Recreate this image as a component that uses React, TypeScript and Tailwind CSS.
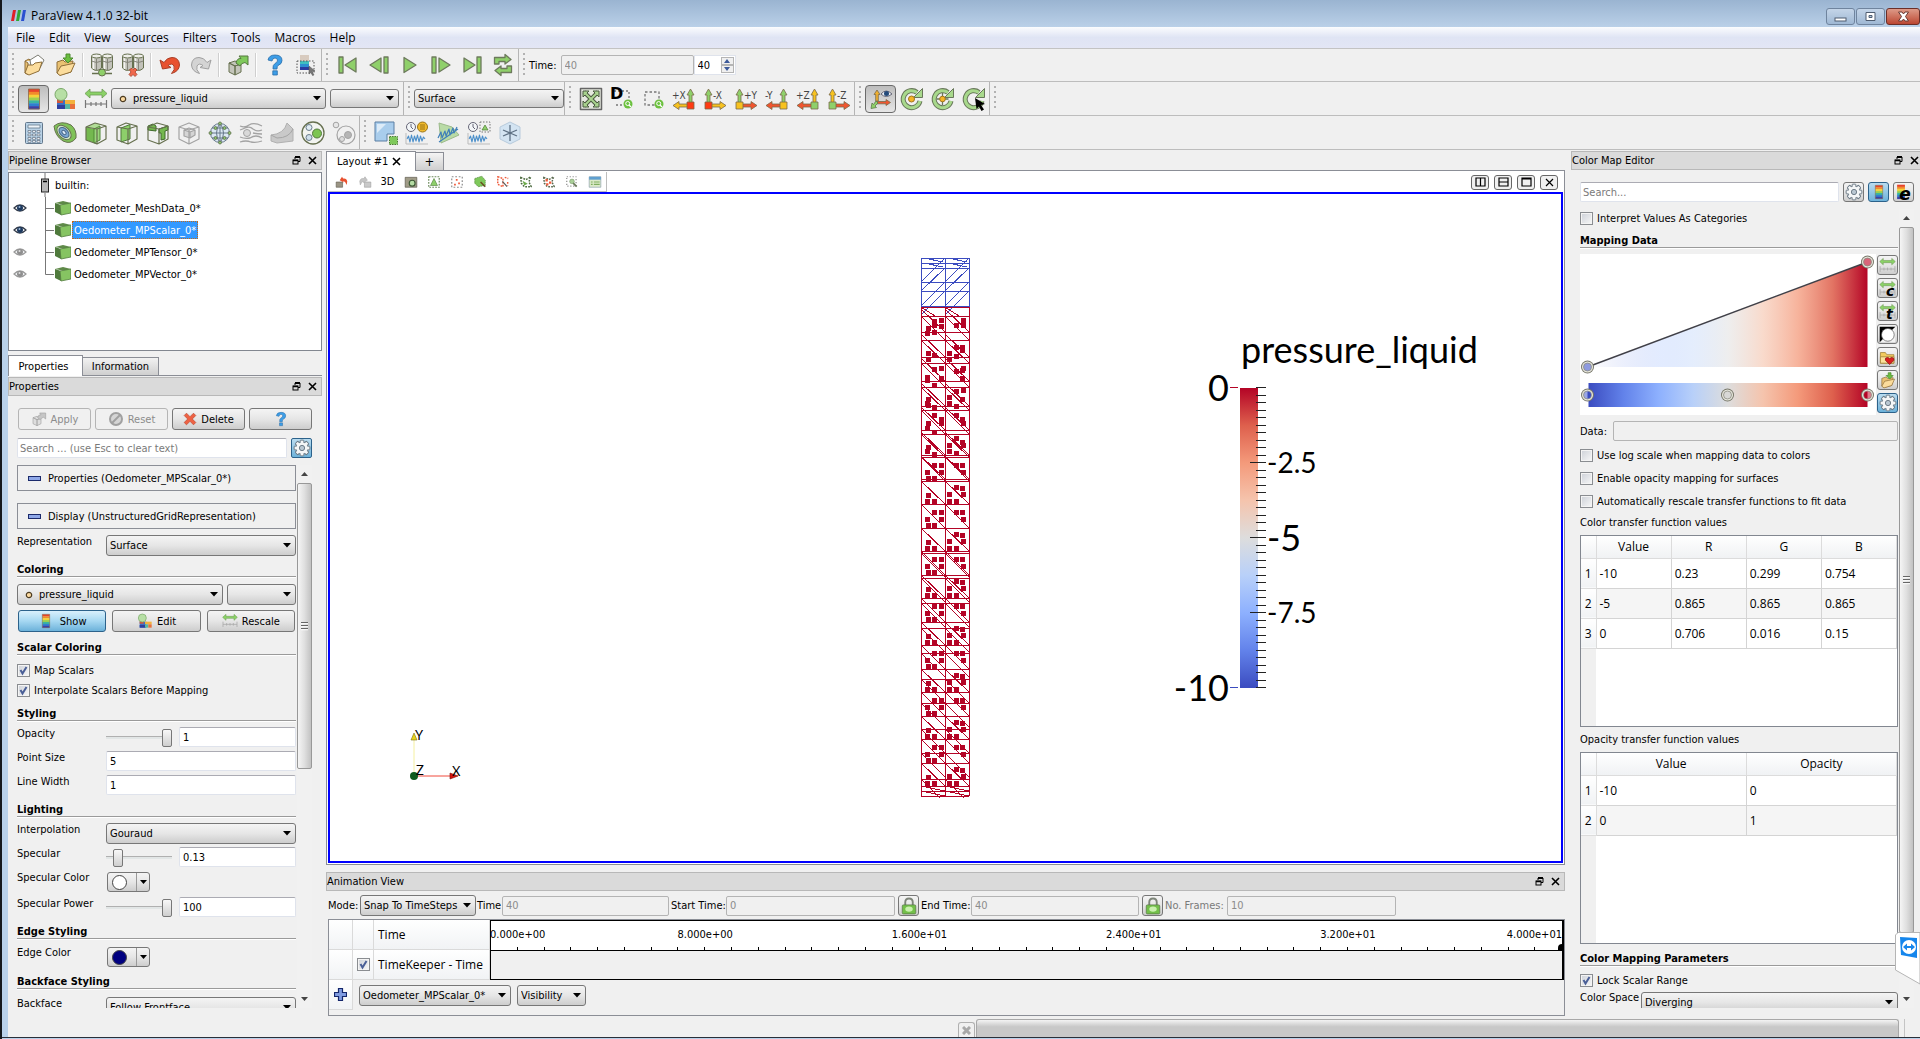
import React, { useId } from "react";

type Kids = { children?: React.ReactNode };

/* ---------- icon primitives ---------- */
const O = "#66704f";
const G = "#8fd06a";
const GREY = "#a3a3a3";

function Ic({ s = 24, children }: Kids & { s?: number }) {
  return (
    <svg width={s} height={s} viewBox="0 0 24 24" fill="none" strokeLinejoin="round" className="shrink-0 overflow-visible">
      {children}
    </svg>
  );
}

const Folder = () => (
  <>
    <path d="M3 8 L3 20 L6 21.500 L6 10 Z M3 8 L7 6 L9 8" fill="#e9c172" stroke="#8f6f3a" />
    <path d="M8 7 L16 2 L22 7 L18 15 L9 13 Z" fill="#fff" stroke="#7d7d74" />
    <path d="M3 20 L6 12 L11 12 L13 10 L20 9 L17 18 L7 22 Z" fill="#fbdc9c" stroke="#8f6f3a" />
  </>
);
const OpenIcon = ({ s }: { s?: number }) => <Ic s={s}><Folder /></Ic>;
const SaveIcon = ({ s }: { s?: number }) => (
  <Ic s={s}>
    <path d="M4 9 L4 20 L7 22 L18 19 L20 8 L12 9 L10 7 Z" fill="#e9c172" stroke="#8f6f3a" />
    <path d="M4 20 L8 13 L13 12 L22 10 L18 19 L7 22.500 Z" fill="#fbdc9c" stroke="#8f6f3a" />
    <path d="M13 1 H17 V5 H20 L15 10 L10 5 H13 Z" fill="#6abf3f" stroke="#4c8a2f" />
  </Ic>
);
const Drum = ({ x }: { x: number }) => (
  <g>
    <path d={`M${x} 3 V15 Q${x + 5} 20 ${x + 10} 15 V3`} fill="#c2c2ba" stroke={O} />
    <path d={`M${x + 2} 5 V16`} stroke="#f4f4f0" strokeWidth="1.500" />
    <path d={`M${x + 5} 6 V17 M${x} 8 Q${x + 5} 11 ${x + 10} 8`} stroke="#85857a" />
    <ellipse cx={x + 5} cy="3" rx="5" ry="2" fill="#efefea" stroke={O} />
  </g>
);
const ConnectIcon = () => (
  <Ic><Drum x={1.500} /><Drum x={12.500} /><path d="M2 20.500 H22" stroke={O} strokeWidth="1.500" /><circle cx="12" cy="19.500" r="3.500" fill={G} stroke={O} /></Ic>
);
const DisconnectIcon = () => (
  <Ic><Drum x={1.500} /><Drum x={12.500} /><path d="M8.500 17 L10.500 15 L12 16.500 L14 15 L16 17 L14 19 L16 21.500 L14 23.500 L12 21.500 L10 23.500 L8 21.500 L10 19 Z" fill="#f0684b" stroke="#a3402c" strokeWidth=".8" /></Ic>
);
const UndoIcon = () => (
  <Ic><path d="M2 7 L4.500 16 L13 14.500 L10 12.500 Q14 9.500 16 13 Q17.500 16.500 13.500 20.500 Q21 18.500 21.500 12 Q21 4.500 14 4.500 Q9 4.500 6 9.500 Z" fill="#e8512f" stroke="#a93e26" /></Ic>
);
const RedoIcon = () => (
  <Ic><path d="M22 7 L19.500 16 L11 14.500 L14 12.500 Q10 9.500 8 13 Q6.500 16.500 10.500 20.500 Q3 18.500 2.500 12 Q3 4.500 10 4.500 Q15 4.500 18 9.500 Z" fill="#d4d4d4" stroke="#a0a0a0" /></Ic>
);
const ApplyIcon = ({ s, grey }: { s?: number; grey?: boolean }) => (
  <Ic s={s}>
    <path d="M3 10 L9 13 V22 L3 19 Z M9 13 L15 11 V19 L9 22 Z M3 10 L9 8 L15 11 L9 13 Z" fill={grey ? "#dedede" : "#c4c5bb"} stroke={grey ? GREY : O} />
    <path d="M10 10 Q11 5 15 5.500 L13 3 H22 V12 L19 9.500 Q15 10 14 13 Z" fill={grey ? "#c6c6c6" : "#7fc95b"} stroke={grey ? GREY : "#55793f"} />
  </Ic>
);
const HelpIcon = ({ s }: { s?: number }) => (
  <Ic s={s}>
    <path d="M5 7 Q6 2 12 2 Q19 2 19 7.500 Q19 11 15 12.500 Q14 13 14 16 H10 Q9.500 12 12 10.500 Q15 9 14.500 7 Q14 5 12 5 Q9.500 5 9 8 Z" fill="#3d9ee8" stroke="#2a6da8" strokeWidth=".8" />
    <rect x="9.800" y="17.800" width="4.500" height="4.200" fill="#3d9ee8" stroke="#2a6da8" strokeWidth=".8" />
  </Ic>
);
const RAINBOW = ["#e8432b", "#f28a2c", "#f5d23a", "#9fd04e", "#3bb5a0", "#2f7fd0", "#3b3fa8"];
function Rainbow({ x, y, w, h }: { x: number; y: number; w: number; h: number }) {
  const n = RAINBOW.length;
  return <>{RAINBOW.map((c, i) => <rect key={c} x={x} y={y + (h / n) * i} width={w} height={h / n + 0.3} fill={c} />)}</>;
}
const PickIcon = () => (
  <Ic>
    <rect x="6" y="2" width="9" height="6" fill="#d8cbbf" />
    <rect x="6" y="8" width="9" height="9" fill="#2d8fd0" /><rect x="6" y="8" width="9" height="3" fill="#3fc0c0" /><rect x="6" y="14" width="9" height="3" fill="#2b3ba0" />
    <path d="M3 8 H20 V20 H3 Z" stroke="#555" strokeDasharray="1.500 1.500" />
    <path d="M15 13 L21 18 L18 18.500 L20 22 L18.500 22.500 L17 19.500 L15 21 Z" fill="#777" stroke="#555" strokeWidth=".5" />
  </Ic>
);
const vs = { fill: G, stroke: "#6d7a5c", strokeWidth: 1.3 };
const FirstIcon = () => <Ic><rect x="3" y="4" width="4" height="16" {...vs} /><path d="M20 5 V19 L9 12 Z" {...vs} /></Ic>;
const PrevIcon = () => <Ic><path d="M14 5 V19 L3 12 Z" {...vs} /><rect x="17" y="4" width="4" height="16" {...vs} /></Ic>;
const PlayIcon = () => <Ic><path d="M6 4.500 V19.500 L18 12 Z" {...vs} /></Ic>;
const NextIcon = () => <Ic><rect x="3" y="4" width="4" height="16" {...vs} /><path d="M10 5 V19 L21 12 Z" {...vs} /></Ic>;
const LastIcon = () => <Ic><path d="M4 5 V19 L15 12 Z" {...vs} /><rect x="17" y="4" width="4" height="16" {...vs} /></Ic>;
const LoopIcon = () => (
  <Ic>
    <path d="M3.500 11 V4.500 H14 V1.500 L20 6.500 L14 11 V8.500 H8 V11 Z" {...vs} />
    <path d="M20.500 13 V19.500 H10 V22.500 L4 17.500 L10 13 V15.500 H16 V13 Z" {...vs} />
  </Ic>
);
const BarIcon = ({ s }: { s?: number }) => (
  <Ic s={s}><Rainbow x={6.500} y={2} w={11} h={20} /><rect x="6.500" y="2" width="11" height="20" stroke="#8a6a4a" strokeWidth=".8" /></Ic>
);
const EditMapIcon = ({ s }: { s?: number }) => (
  <Ic s={s}>
    <rect x="4" y="13" width="10" height="9" fill="#3d6fc4" /><rect x="4" y="12" width="6" height="4" fill="#d4553a" /><rect x="4" y="18" width="9" height="4" fill="#2f3f9e" />
    <rect x="12" y="13" width="10" height="4" fill="#f3b23c" /><rect x="12" y="17" width="5" height="5" fill="#57b8a4" /><rect x="17" y="17" width="5" height="5" fill="#e8703a" />
    <circle cx="8" cy="7.500" r="6" fill="#b7dfa5" stroke="#7aa868" />
  </Ic>
);
const RangeIcon = ({ s, letter, dim }: { s?: number; letter?: string; dim?: boolean }) => (
  <Ic s={s}>
    <path d="M1 6.500 L6 2 V5 H18 V2 L23 6.500 L18 11 V8 H6 V11 Z" fill="#8bd267" stroke="#6d9a55" strokeWidth=".8" />
    <path d="M1.500 13 V21 M22.500 13 V21 M7 15 V19 M12 15 V19 M17 15 V19 M1.500 17 H22.500" stroke={dim ? "#aaa" : "#777"} strokeWidth="1.200" />
    {letter && <text x="10" y="22" fontSize="20" fontWeight="800" fontStyle="italic" fontFamily="DejaVu Sans" fill="#000">{letter}</text>}
  </Ic>
);
const CalcIcon = () => (
  <Ic>
    <rect x="3.500" y="1.500" width="17" height="21" rx="1" fill="#b9d2e6" stroke="#63788c" />
    <rect x="6" y="4" width="12" height="3" fill="#eef4f8" stroke="#63788c" strokeWidth=".8" />
    {[9.5, 13, 16.5, 19.5].map((y) => [6, 10.5, 15].map((x) => <rect key={`${x}-${y}`} x={x} y={y} width="3" height="1.800" fill="#fff" stroke="#5e6f7f" strokeWidth=".7" />))}
  </Ic>
);
const ContourIcon = () => (
  <Ic>
    <path d="M1 5 Q8 -1 18 4 Q24 9 23 17 Q18 24 10 20 Q2 15 1 5 Z" fill="#7fc258" stroke={O} />
    <ellipse cx="11" cy="11.500" rx="8.500" ry="5.500" transform="rotate(45 11 11.500)" fill="#cfe6c6" stroke={O} />
    <ellipse cx="11" cy="11.500" rx="6" ry="3.800" transform="rotate(45 11 11.500)" fill="#7ba7d2" stroke="#48688a" />
    <ellipse cx="11" cy="11.500" rx="2.500" ry="1.600" transform="rotate(45 11 11.500)" fill="#dcebf7" stroke="#48688a" />
  </Ic>
);
const CubeWire = ({ c = O }: { c?: string }) => <path d="M2 6 L13 8 V23 L2 19 Z M13 8 L22 5 V18 L13 23 M2 6 L11 2 L22 5" stroke={c} strokeWidth="1.200" />;
const ClipIcon = () => <Ic><path d="M2 6 L11 8 V22 L2 19 Z" fill="#74b84f" /><path d="M2 6 L11 2 L17 3.500 L11 8 Z" fill="#b1dd96" /><path d="M10 8 L16 5 V19 L10 22 Z" fill="#9bd47c" stroke="#4f8a35" /><CubeWire /></Ic>;
const SliceIcon = () => <Ic><path d="M6 7 L15 3.500 V18 L6 21 Z" fill="#8dcf6a" stroke="#4f7a3a" /><CubeWire /></Ic>;
const ThresholdIcon = () => <Ic><path d="M2 5 L7 3 L10 5 V10 L2 9 Z" fill="#74b84f" stroke="#3f6a2c" /><path d="M13 8 L22 5 V9 L19 10 V18 L15 19 V12 H13 Z" fill="#74b84f" stroke="#3f6a2c" /><CubeWire /></Ic>;
const SubsetIcon = () => <Ic><path d="M7 9 L13 11 V17 L7 15 Z M13 11 L18 9 V14 L13 17 M7 9 L12 7 L18 9" fill="#d5d5d5" stroke={GREY} strokeWidth="1.200" /><path d="M2 6 L12 9 V23 L2 18 Z M12 9 L22 6 V18 L12 23 M2 6 L12 2 L22 6" stroke={GREY} strokeWidth="1.200" /></Ic>;
const GlyphIcon = () => (
  <Ic>
    <circle cx="12" cy="12" r="9.500" fill="#dbe8f3" stroke="#66788a" />
    <path d="M12 2 V22 M2 12 H22 M12 2 Q5 12 12 22 M12 2 Q19 12 12 22 M4 7 H20 M4 17 H20" stroke="#66788a" />
    {[[12, 2.5], [2.5, 12], [21.5, 12], [12, 21.5], [7.5, 7], [16.5, 7], [7.5, 17], [16.5, 17]].map(([x, y]) => <circle key={`${x}-${y}`} cx={x} cy={y} r="1.500" fill="#8cc46c" stroke="#5e6f4d" strokeWidth=".8" />)}
  </Ic>
);
const StreamIcon = () => <Ic><circle cx="8" cy="12" r="3.500" fill="#d9d9d9" stroke={GREY} /><path d="M1 5 Q6 7 10 4 Q15 1 23 5 M1 9 Q4 8 6 7 Q11 5 14 8 Q18 11 23 9 M14 12 Q18 13 23 13 M1 16 Q6 18 11 17 Q17 13 23 17 M1 21 Q7 19 12 21 Q17 22 23 20" stroke={GREY} strokeWidth="1.300" /></Ic>;
const WarpIcon = () => <Ic><path d="M1 14 Q14 13 17 2 L23 8 V20 L7 22 L1 20 Z" fill="#c9c9c9" stroke="#b0b0b0" /><path d="M1 14 L7 17 Q19 17 23 8" stroke="#a5a5a5" /></Ic>;
const GroupIcon = () => <Ic><circle cx="12" cy="12" r="11" fill="#f2f4f0" stroke={O} strokeWidth="1.300" /><circle cx="8" cy="6.500" r="3" fill="#e0ecf4" stroke="#6b7d8c" /><circle cx="8" cy="16.500" r="3" fill="#cfe0ec" stroke="#6b7d8c" /><circle cx="16" cy="12.500" r="4.500" fill="#7cc552" stroke="#55793f" /></Ic>;
const ExtractIcon = () => <Ic><circle cx="14" cy="14" r="9" stroke={GREY} strokeWidth="1.200" /><circle cx="4" cy="4" r="2.800" stroke={GREY} fill="#e6e6e6" /><circle cx="10" cy="18" r="2.500" stroke={GREY} fill="#ddd" /><circle cx="16" cy="14" r="3.500" fill="#b5b5b5" stroke={GREY} /></Ic>;
const FindIcon = () => (
  <Ic><path d="M1 1 H20 V13 H13 V20 H1 Z" fill="#a9cdec" stroke="#5b7fa3" /><path d="M3 3 H12 L3 12 Z" fill="#dcebf8" /><rect x="15.500" y="15.500" width="8" height="8" fill="#7fc95b" stroke="#4c7a35" strokeDasharray="1.500 1" /></Ic>
);
const Wave = ({ y = 18 }: { y?: number }) => <path d={`M2 ${y} l1.500 -3 l1.500 6 l1.500 -7 l1.500 7 l1.500 -6 l1.500 5 l1.500 -6 l1.500 7 l1.500 -6 l1.500 5 l1.500 -4 l1.500 2`} stroke="#4b8fca" strokeWidth="1.100" />;
const PlotTimeIcon = () => <Ic><Wave /><path d="M1 12 V23 H23" stroke="#bbb" /><circle cx="6" cy="6" r="4.500" fill="#f3f6f8" stroke="#667" /><path d="M6 3 V6 L8 8" stroke="#667" /><circle cx="17.500" cy="6" r="5" fill="#f2bb2d" stroke="#9a7416" /><path d="M15 4 H20 M15 6 H20 M15 8 H20" stroke="#9a7416" /></Ic>;
const PlotLineIcon = () => <Ic><path d="M3 2 L16 6 L23 14 L5 22 Z" fill="#b9dba6" stroke="#9cba8b" /><path d="M2 17 L5 11 L6 17 L9 10 L10 15 L13 8 L14 14 L17 7 L18 12 L21 6 M3 21 L22 8" stroke="#3f7fb8" strokeWidth="1.200" /></Ic>;
const PlotSelIcon = () => <Ic><Wave /><path d="M1 12 V23 H23" stroke="#bbb" /><circle cx="6" cy="6" r="4.500" fill="#f3f6f8" stroke="#667" /><path d="M6 3 V6 L8 8" stroke="#667" /><rect x="13" y="1" width="10" height="10" stroke="#777" strokeDasharray="1.500 1.500" /><path d="M18 4 L21 9 H15 Z" fill={G} stroke="#4c7a35" strokeWidth=".7" /></Ic>;
const ProbeIcon = () => <Ic><path d="M2 6 L12 1 L22 6 V18 L12 23 L2 18 Z" fill="#d3e4f2" stroke="#b7cadb" /><path d="M12 4 V20 M5 9 L19 15 M19 9 L5 15" stroke="#5e7184" strokeWidth="1.300" /></Ic>;
const ResetCamIcon = () => (
  <Ic><rect x="1.500" y="1.500" width="21" height="21" fill="#e4e8de" stroke="#666" strokeWidth="1.500" /><path d="M5 5 L19 19 M19 5 L5 19" stroke="#4b5a40" strokeWidth="4" /><path d="M4 4 H10 L4 10 Z M20 4 V10 L14 4 Z M20 20 H14 L20 14 Z M4 20 V14 L10 20 Z" fill="#a9d48e" stroke="#4b5a40" /><path d="M6 6 L18 18 M18 6 L6 18" stroke="#a9d48e" strokeWidth="2" /></Ic>
);
const Mag = () => <><circle cx="18" cy="17" r="4.500" fill="#6cc13f" /><circle cx="17.700" cy="16.500" r="2" stroke="#fff" /><path d="M19 18 L21 20" stroke="#fff" strokeWidth="1.300" /></>;
const ZoomDataIcon = () => <Ic><path d="M4 4 H19 V18 H5" stroke="#777" strokeDasharray="2 2" strokeWidth="1.300" /><Mag /><text x="0" y="12" fontSize="16" fontWeight="bold" fontFamily="DejaVu Sans" fill="#000">D</text></Ic>;
const ZoomBoxIcon = () => <Ic><rect x="4" y="5" width="14" height="13" stroke="#777" strokeDasharray="2.500 2" strokeWidth="1.300" /><Mag /></Ic>;
function AxisIcon({ label, up, side, sq, flip }: { label: string; up: string; side: string; sq: string; flip?: boolean }) {
  const w = { stroke: "#7a6a4a", strokeWidth: 0.8 };
  return (
    <Ic>
      {flip ? (
        <>
          <path d="M4 16 V8 H2 L5.500 2 L9 8 H7 V16 Z" fill={up} {...w} />
          <path d="M7 17 H17 V14.500 L23 18.500 L17 22.500 V20 H7 Z" fill={side} {...w} />
          <rect x="2" y="15" width="7" height="7" fill={sq} {...w} />
          <text x="10" y="12" fontSize="10" fontFamily="DejaVu Sans Condensed" fill="#444">{label}</text>
        </>
      ) : (
        <>
          <path d="M17 16 V8 H15 L18.500 2 L22 8 H20 V16 Z" fill={up} {...w} />
          <path d="M17 17 H7 V14.500 L1 18.500 L7 22.500 V20 H17 Z" fill={side} {...w} />
          <rect x="15" y="15" width="7" height="7" fill={sq} {...w} />
          <text x="0" y="12" fontSize="10" fontFamily="DejaVu Sans Condensed" fill="#444">{label}</text>
        </>
      )}
    </Ic>
  );
}
const CenterAxesIcon = () => (
  <Ic>
    <path d="M8 3 L11 7.500 H9.300 V14 H6.700 V7.500 H5 Z" fill="#f0b030" stroke="#7a6a4a" strokeWidth=".8" />
    <path d="M8 14.500 H17 V12.500 L21.500 15.500 L17 18.500 V16.800 H8 Z" fill="#f0552f" stroke="#7a6a4a" strokeWidth=".8" />
    <path d="M7 14 L9 16 L6 19 L7.500 20.500 L2 21.500 L3 16 L4.500 17.500 Z" fill="#8fd06a" stroke="#5c7a4a" strokeWidth=".8" />
    <path d="M12 7 Q17 1 23 7 Q17 12 12 7 Z" fill="#e8eef4" stroke="#667" /><circle cx="17.500" cy="6.500" r="2.500" fill="#244a7a" />
  </Ic>
);
const ArcArrow = ({ d = "M20 14 A8.500 8.500 0 1 1 17 5.500" }: { d?: string }) => (
  <>
    <path d={d} stroke="#68775a" strokeWidth="5" /><path d={d} stroke="#a8d98c" strokeWidth="3" />
    <path d="M22.500 1.500 V10.500 H13.500 Z" fill="#a8d98c" stroke="#68775a" />
  </>
);
const RotCenterIcon = () => <Ic><ArcArrow /><circle cx="11.500" cy="12" r="3" fill="#f5b427" stroke="#a3751b" /></Ic>;
const PickCenterIcon = () => <Ic><ArcArrow /><path d="M11.500 6 V18 M5.500 12 H17.500" stroke="#68775a" strokeWidth="1.300" /><circle cx="11.500" cy="12" r="2.800" fill="#f5b427" stroke="#a3751b" /></Ic>;
const ResetCenterIcon = () => <Ic><ArcArrow /><path d="M13 11 L23 17 L19 18 L22 22.500 L19.500 24 L17 19.500 L14.500 22 Z" fill="#000" /></Ic>;
const GearIcon = ({ s = 18 }: { s?: number }) => (
  <Ic s={s}>
    {[0, 45, 90, 135].map((a) => <rect key={a} x="9.500" y="1.500" width="5" height="21" rx="1" fill="#f4f6f7" stroke="#6c7a86" strokeWidth="1.300" transform={`rotate(${a} 12 12)`} />)}
    <circle cx="12" cy="12" r="7.500" fill="#f4f6f7" />
    <circle cx="12" cy="12" r="3.500" fill="#b9c7d2" stroke="#6c7a86" strokeWidth="1.300" />
  </Ic>
);
const FavIcon = () => (
  <Ic s={17}>
    <path d="M2 5 H9 L11 8 H21 V20 H2 Z" fill="#f2cb5e" stroke="#9a7a2e" /><path d="M2 11 H21 V20 H2 Z" fill="#fbe39a" stroke="#9a7a2e" />
    <path d="M15 22 L9 16 Q8 12 12 12 Q14 12 15 14 Q16 12 18.500 12 Q22 13 21 16 Z" fill="#d81f1f" stroke="#8a1212" />
  </Ic>
);
const InvertIcon = () => <Ic s={17}><rect x="1" y="1" width="22" height="22" fill="#f2f2f2" /><path d="M1 23 V1 H23 Z" fill="#000" /><circle cx="12.500" cy="12.500" r="9" fill="#fff" stroke="#555" /></Ic>;
const PresetMapIcon = () => <Ic s={17}><Rainbow x={3} y={1} w={11} h={20} /><text x="6" y="23" fontSize="24" fontWeight="800" fontStyle="italic" fontFamily="DejaVu Sans" fill="#000">e</text></Ic>;
const LockIcon = () => (
  <Ic s={18}><path d="M7 11 V7 Q7 2 12 2 Q17 2 17 7 V11" stroke="#7d8478" strokeWidth="2.500" /><rect x="3" y="10.500" width="18" height="12" rx="1.500" fill="#73c04a" stroke="#5b7a4a" /><ellipse cx="12" cy="16" rx="5" ry="3.500" fill="#c9f0ae" /></Ic>
);
const EyeIcon = ({ dim }: { dim?: boolean }) => (
  <svg width="14" height="12" viewBox="0 0 14 12" fill="none">
    <path d="M1 6 Q7 0 13 6 Q7 12 1 6 Z" fill="#f4f6f8" stroke={dim ? "#9a9a9a" : "#333b48"} strokeWidth="1.200" />
    <circle cx="7" cy="6" r="3" fill={dim ? "#8f8f8f" : "#1d3a5f"} /><circle cx="6.500" cy="5" r="1" fill={dim ? "#e0e0e0" : "#9db8d8"} />
  </svg>
);
const GreenCube = () => (
  <svg width="16" height="16" viewBox="0 0 16 16" className="shrink-0">
    <path d="M0 3 L8 1 L16 3 L10 5 Z" fill="#5f8a49" /><path d="M0 3 L6 5 V15 L0 12 Z" fill="#4f7a3c" /><path d="M5 5 L16 3 V13 L6 15 Z" fill="#86c462" stroke="#557f41" strokeWidth=".8" />
  </svg>
);
const FloatIcon = () => <svg width="9" height="9" viewBox="0 0 9 9" fill="none"><path d="M3 3 V1 H8 V5.500 H6" stroke="#000" /><path d="M3 1 H8" stroke="#000" strokeWidth="2" /><rect x="1" y="4" width="5" height="4" stroke="#000" /><path d="M1 4.500 H6" stroke="#000" strokeWidth="1.500" /></svg>;
const CrossIcon = () => <svg width="9" height="9" viewBox="0 0 9 9"><path d="M1 1 L8 8 M8 1 L1 8" stroke="#000" strokeWidth="1.600" /></svg>;
const RedX = () => <Ic s={14}><path d="M2 6 L6 2 L12 8 L18 2 L22 6 L16 12 L22 18 L18 22 L12 16 L6 22 L2 18 L8 12 Z" fill="#ee6244" stroke="#b43a22" /></Ic>;
const ResetIcon = () => <Ic s={16}><circle cx="12" cy="12" r="9" fill="#d5d5d5" stroke="#a0a0a0" strokeWidth="3" /><path d="M6 18 L18 6" stroke="#a0a0a0" strokeWidth="3" /></Ic>;
const PointIcon = () => <svg width="8" height="8" viewBox="0 0 8 8"><circle cx="4" cy="4" r="2.700" fill="#fbd9a0" stroke="#4a3a20" strokeWidth="1.200" /></svg>;

/* ---------- widgets ---------- */
const FACE = "rounded-[3px] border border-[#777] bg-linear-to-b from-[#f4f4f4] via-[#e6e6e6] to-[#cdcdcd]";

function Select({ label, value, className = "", small, icon }: { label: string; value?: string; className?: string; small?: boolean; icon?: boolean }) {
  return (
    <span className={"relative flex shrink-0 items-center " + className}>
      <select aria-label={label} className={(small ? "h-[19px]" : "h-[21px]") + " w-full appearance-none pr-4 text-[11px] outline-none " + (icon ? "pl-[21px] " : "pl-[3px] ") + FACE}>
        <option>{value ?? ""}</option>
      </select>
      {icon && <span className="pointer-events-none absolute left-2"><PointIcon /></span>}
      <svg width="8" height="5" viewBox="0 0 8 5" className="pointer-events-none absolute right-[5px]"><path d="M0 0 H8 L4 4.500 Z" fill="#000" /></svg>
    </span>
  );
}

function Field({ label, value, className = "", disabled }: { label: string; value?: string; className?: string; disabled?: boolean }) {
  return (
    <input
      aria-label={label}
      defaultValue={value}
      disabled={disabled}
      className={"h-5 min-w-0 rounded-[2px] border px-[3px] text-[11px] outline-none " + (disabled ? "border-[#b4b4b4] bg-[#f0f0f0] text-[#8c8c8c] " : "border-[#dfe3ec] border-t-[#ababb3] bg-white ") + className}
    />
  );
}

function Check({ label, on }: { label: string; on?: boolean }) {
  const id = useId();
  return (
    <span className="flex items-center gap-1">
      <span className="relative flex">
        <input id={id} type="checkbox" defaultChecked={on} className="h-[13px] w-[13px] appearance-none border border-[#8a8d91] bg-linear-to-br from-[#cdd1d8] to-[#f8f8f8] shadow-[inset_0_0_0_1px_#f4f4f4]" />
        {on && <svg width="13" height="13" viewBox="0 0 13 13" fill="none" className="pointer-events-none absolute inset-0"><path d="M3.500 6 L5.500 9.500 L9.500 3" stroke="#4a5f97" strokeWidth="2" /></svg>}
      </span>
      <label htmlFor={id} className="whitespace-nowrap">{label}</label>
    </span>
  );
}

function Slider({ label, value }: { label: string; value: number }) {
  return (
    <input
      type="range" aria-label={label} defaultValue={value} min={0} max={100}
      className="h-5 w-[66px] appearance-none bg-transparent [&::-webkit-slider-runnable-track]:h-[3px] [&::-webkit-slider-runnable-track]:border-t [&::-webkit-slider-runnable-track]:border-[#b0b0b0] [&::-webkit-slider-runnable-track]:bg-[#e2e6e6] [&::-webkit-slider-thumb]:-mt-2 [&::-webkit-slider-thumb]:h-[18px] [&::-webkit-slider-thumb]:w-[10px] [&::-webkit-slider-thumb]:appearance-none [&::-webkit-slider-thumb]:rounded-[2px] [&::-webkit-slider-thumb]:border [&::-webkit-slider-thumb]:border-[#777] [&::-webkit-slider-thumb]:bg-linear-to-b [&::-webkit-slider-thumb]:from-[#f8f8f8] [&::-webkit-slider-thumb]:to-[#cfcfcf]"
    />
  );
}

const Grip = () => <span className="mx-1 h-[25px] w-[2px] shrink-0 bg-[linear-gradient(#b2b2b2_2px,transparent_2px)] bg-[length:2px_5px]" />;
const Sep = () => <span className="mx-[2px] h-6 w-[2px] shrink-0 border-l border-[#cfcfcf] bg-white" />;
const Group = ({ children, last }: Kids & { last?: boolean }) => (
  <div className={"flex h-full items-center " + (last ? "" : "border-r border-[#b5b5b5]")}><Grip />{children}</div>
);
function Tool({ name, on, children }: Kids & { name: string; on?: boolean }) {
  return (
    <button type="button" aria-label={name} className={"flex h-7 w-[31px] shrink-0 items-center justify-center rounded-[4px] " + (on ? "border border-[#6b6b6b] bg-linear-to-b from-[#bdbdbd] to-[#e6e6e6]" : "")}>
      {children}
    </button>
  );
}

function DockTitle({ title }: { title: string }) {
  return (
    <div className="flex h-[19px] shrink-0 items-center justify-between border border-[#b8b8b8] bg-[#dadada] pr-1">
      <span>{title}</span>
      <span className="flex gap-[7px]">
        <button type="button" aria-label={`Float ${title}`}><FloatIcon /></button>
        <button type="button" aria-label={`Close ${title}`}><CrossIcon /></button>
      </span>
    </div>
  );
}

function Heading({ children, className = "" }: Kids & { className?: string }) {
  return <h2 className={"border-b border-[#9a9a9a] text-[11px] leading-[13px] font-bold shadow-[0_1px_0_#fff] " + className}>{children}</h2>;
}

function ScrollBar({ thumb, className = "" }: { thumb: string; className?: string }) {
  return (
    <div className={"flex w-[15px] shrink-0 flex-col items-center bg-[#f1f1f1] " + className}>
      <svg width="7" height="18" viewBox="0 0 7 18" className="shrink-0"><path d="M0 11 L3.500 7 L7 11 Z" fill="#444" /></svg>
      <div className={"flex w-full items-center justify-center rounded-[2px] border border-[#989898] bg-linear-to-r from-[#f5f5f5] via-[#dfdfdf] to-[#c2c2c2] " + thumb}>
        <span className="h-[9px] w-[7px] bg-[linear-gradient(#666_1px,#fff_1px,transparent_3px)] bg-[length:7px_3px]" />
      </div>
      <span className="flex-1" />
      <svg width="7" height="18" viewBox="0 0 7 18" className="shrink-0"><path d="M0 7 L3.500 11 L7 7 Z" fill="#444" /></svg>
    </div>
  );
}

/* ---------- window chrome ---------- */
function TitleBar() {
  return (
    <header className="flex h-[27px] shrink-0 items-center justify-between bg-linear-to-b from-[#9ab4d1] to-[#bad0e8] pl-[9px]">
      <div className="flex items-center gap-[5px] font-['Open_Sans',sans-serif] text-[12px]">
        <svg width="15" height="11" viewBox="0 0 15 11" className="mt-1"><path d="M2 0 H5 L3 11 H0 Z" fill="#e0202a" /><path d="M7 0 H10 L8 11 H5 Z" fill="#2fa836" /><path d="M12 0 H15 L13 11 H10 Z" fill="#2a4fd0" /></svg>
        <span className="pt-1">ParaView 4.1.0 32-bit</span>
      </div>
      <div className="flex gap-px pt-[6px]">
        {[<rect key="m" x="1" y="7" width="11" height="3" fill="#fff" stroke="#4f5d70" />, <path key="r" d="M2 1.500 H11 V9.500 H2 Z M5 4.500 H8 V6.500 H5 Z" fill="#fff" stroke="#4f5d70" fillRule="evenodd" />, <path key="c" d="M1.500 1 H5 L6.500 3 L8 1 H11.500 L8.500 5.500 L11.500 10 H8 L6.500 8 L5 10 H1.500 L4.500 5.500 Z" fill="#fff" stroke="#6a3a34" />].map((g, i) => (
          <button key={i} type="button" aria-label={["Minimize", "Restore", "Close"][i]} className={"flex h-[17px] items-center justify-center rounded-[3px] border " + (i === 2 ? "w-[34px] border-[#6b2f28] bg-linear-to-b from-[#dd9a88] to-[#bb4632]" : "w-[29px] border-[#6f849e] bg-linear-to-b from-[#c4d5e8] to-[#9fb8d4]")}>
            <svg width="13" height="11" viewBox="0 0 13 11">{g}</svg>
          </button>
        ))}
      </div>
    </header>
  );
}

function Toolbars() {
  const gr = "#8fd06a", rd = "#f0552f", yl = "#f7c21f";
  return (
    <>
      <div className="flex h-[34px] shrink-0 items-center border-t border-b border-t-[#c3c3c3] border-b-[#bdbdbd]">
        <Group>
          <Tool name="Open"><OpenIcon /></Tool><Tool name="Save data"><SaveIcon /></Tool><Sep />
          <Tool name="Connect"><ConnectIcon /></Tool><Tool name="Disconnect"><DisconnectIcon /></Tool><Sep />
          <Tool name="Undo"><UndoIcon /></Tool><Tool name="Redo"><RedoIcon /></Tool><Sep />
          <Tool name="Auto apply"><ApplyIcon /></Tool><Sep />
          <Tool name="Help"><HelpIcon /></Tool><Tool name="Find data"><PickIcon /></Tool>
        </Group>
        <Group>
          <Tool name="First frame"><FirstIcon /></Tool><Tool name="Previous frame"><PrevIcon /></Tool><Tool name="Play"><PlayIcon /></Tool>
          <Tool name="Next frame"><NextIcon /></Tool><Tool name="Last frame"><LastIcon /></Tool><Tool name="Loop"><LoopIcon /></Tool>
        </Group>
        <Group last>
          <span className="pr-1">Time:</span>
          <Field label="Time value" value="40" disabled className="w-[133px]" />
          <span className="flex h-5 items-center border border-[#dfe3ec] bg-white pr-px">
            <input aria-label="Time step" defaultValue="40" className="w-[26px] pl-[3px] text-[11px] outline-none" />
            <span className="flex flex-col">
              {["M0 4 L3 0 L6 4 Z", "M0 0 L3 4 L6 0 Z"].map((d, i) => (
                <button key={d} type="button" aria-label={i ? "Decrease" : "Increase"} className="flex h-2 w-[13px] items-center justify-center border border-[#b5b5b5] bg-[#f0f0f0]"><svg width="6" height="4" viewBox="0 0 6 4"><path d={d} fill="#3d5a9a" /></svg></button>
              ))}
            </span>
          </span>
        </Group>
      </div>
      <div className="flex h-[34px] shrink-0 items-center border-b border-[#bdbdbd]">
        <Group>
          <Tool name="Toggle color legend" on><BarIcon /></Tool><Tool name="Edit color map"><EditMapIcon /></Tool><Tool name="Rescale to data range"><RangeIcon /></Tool>
          <Select label="Color by" value="pressure_liquid" icon className="w-[215px]" />
          <Select label="Component" small className="mx-1 w-[69px]" />
        </Group>
        <Group>
          <Select label="Representation" value="Surface" small className="w-[150px]" />
        </Group>
        <Group>
          <Tool name="Reset camera"><ResetCamIcon /></Tool><Tool name="Zoom to data"><ZoomDataIcon /></Tool><Tool name="Zoom to box"><ZoomBoxIcon /></Tool>
          <Tool name="Plus X"><AxisIcon label="+X" up={gr} side={yl} sq="#ff3b12" /></Tool>
          <Tool name="Minus X"><AxisIcon label="-X" up={gr} side={yl} sq="#ff3b12" flip /></Tool>
          <Tool name="Plus Y"><AxisIcon label="+Y" up={gr} side={rd} sq={yl} flip /></Tool>
          <Tool name="Minus Y"><AxisIcon label="-Y" up={gr} side={rd} sq={yl} /></Tool>
          <Tool name="Plus Z"><AxisIcon label="+Z" up={yl} side={rd} sq={gr} /></Tool>
          <Tool name="Minus Z"><AxisIcon label="-Z" up={yl} side={rd} sq={gr} flip /></Tool>
        </Group>
        <Group>
          <Tool name="Show orientation axes" on><CenterAxesIcon /></Tool><Tool name="Show center"><RotCenterIcon /></Tool>
          <Tool name="Reset center"><PickCenterIcon /></Tool><Tool name="Pick center"><ResetCenterIcon /></Tool>
        </Group>
        <Group last />
      </div>
      <div className="flex h-[34px] shrink-0 items-center border-b border-[#bdbdbd]">
        <Group>
          <Tool name="Calculator"><CalcIcon /></Tool><Tool name="Contour"><ContourIcon /></Tool><Tool name="Clip"><ClipIcon /></Tool><Tool name="Slice"><SliceIcon /></Tool>
          <Tool name="Threshold"><ThresholdIcon /></Tool><Tool name="Extract subset"><SubsetIcon /></Tool><Tool name="Glyph"><GlyphIcon /></Tool><Tool name="Stream tracer"><StreamIcon /></Tool>
          <Tool name="Warp"><WarpIcon /></Tool><Tool name="Group datasets"><GroupIcon /></Tool><Tool name="Extract group"><ExtractIcon /></Tool>
        </Group>
        <Group last>
          <Tool name="Extract selection"><FindIcon /></Tool><Tool name="Plot global variables"><PlotTimeIcon /></Tool><Tool name="Plot over line"><PlotLineIcon /></Tool>
          <Tool name="Plot selection"><PlotSelIcon /></Tool><Tool name="Probe"><ProbeIcon /></Tool>
        </Group>
      </div>
    </>
  );
}

/* ---------- left dock ---------- */
const SOURCES = [
  { name: "Oedometer_MeshData_0*", shown: true },
  { name: "Oedometer_MPScalar_0*", shown: true, selected: true },
  { name: "Oedometer_MPTensor_0*", shown: false },
  { name: "Oedometer_MPVector_0*", shown: false },
];

function Pipeline() {
  return (
    <div className="mt-[2px] h-[179px] shrink-0 border border-[#828790] bg-white">
      <div className="flex h-6 items-center pl-[31px]">
        <svg width="10" height="24" viewBox="0 0 10 24"><path d="M5 0 V6 M5 20 V24" stroke="#777" /><rect x="1.500" y="6" width="7" height="13" fill="#b8b8b8" stroke="#222" /><path d="M3 8.500 H7" stroke="#000" strokeWidth="1.500" /></svg>
        <span className="pl-[5px]">builtin:</span>
      </div>
      {SOURCES.map((s, i) => (
        <div key={s.name} className="flex h-[22px] items-center pl-1">
          <EyeIcon dim={!s.shown} />
          <svg width="28" height="22" viewBox="0 0 28 22" className="shrink-0"><path d={i === 3 ? "M18.500 0 V11.500 H27" : "M18.500 0 V22 M18.500 11.500 H27"} stroke="#777" fill="none" /></svg>
          <GreenCube />
          <span className={"ml-px flex h-[18px] items-center border px-px " + (s.selected ? "border-dotted border-[#c46a1a] bg-[#3399ff] text-white" : "border-transparent")}>{s.name}</span>
        </div>
      ))}
    </div>
  );
}

const Row = ({ label, children, className = "h-6" }: Kids & { label: string; className?: string }) => (
  <div className={"flex items-start " + className}>
    <span className="w-[89px] shrink-0 leading-[14px]">{label}</span>
    {children}
  </div>
);

const Fold = ({ children }: Kids) => (
  <button type="button" className="flex h-[26px] w-full shrink-0 items-center gap-[7px] border border-[#8b8e96] pl-[10px]">
    <svg width="13" height="5" viewBox="0 0 13 5"><rect x=".5" y=".5" width="12" height="4" fill="#8fa8e8" stroke="#1b2a6b" /></svg>
    {children}
  </button>
);

const ColorButton = ({ color, label }: { color: string; label: string }) => (
  <button type="button" aria-label={label} className={"mt-px ml-px flex h-5 w-[43px] items-center " + FACE}>
    <span className="ml-1 h-[15px] w-[15px] rounded-full border border-[#444]" style={{ backgroundColor: color }} />
    <span className="ml-[9px] flex h-full flex-1 items-center justify-center border-l border-[#999]"><svg width="7" height="4" viewBox="0 0 7 4"><path d="M0 0 H7 L3.500 4 Z" fill="#000" /></svg></span>
  </button>
);

function LeftDock() {
  const btn = "flex items-center justify-center gap-1 ";
  return (
    <aside className="flex w-[314px] shrink-0 flex-col pt-px">
      <DockTitle title="Pipeline Browser" />
      <Pipeline />
      <div role="tablist" className="mt-1 flex h-[21px] shrink-0 items-end border-b border-[#8b8e96]">
        <button type="button" role="tab" aria-selected className="-mb-px h-[21px] w-[75px] border border-b-0 border-[#8b8e96] bg-white pr-1">Properties</button>
        <button type="button" role="tab" aria-selected={false} className="h-[18px] w-[76px] border border-b-0 border-l-0 border-[#8b8e96] bg-linear-to-b from-[#f2f2f2] to-[#cfcfcf]">Information</button>
      </div>
      <div className="mt-px"><DockTitle title="Properties" /></div>
      <div className="mt-3 flex h-[22px] shrink-0 gap-1 pr-[10px] pl-[10px]">
        <button type="button" disabled className={btn + "flex-7 rounded-[3px] border border-[#b5b5b5] text-[#8c8c8c]"}><ApplyIcon s={16} grey />Apply</button>
        <button type="button" disabled className={btn + "flex-7 rounded-[3px] border border-[#b5b5b5] text-[#8c8c8c]"}><ResetIcon />Reset</button>
        <button type="button" className={btn + "flex-7 " + FACE}><RedX />Delete</button>
        <button type="button" aria-label="Help" className={btn + "flex-6 " + FACE}><HelpIcon s={16} /></button>
      </div>
      <div className="mt-2 flex h-5 shrink-0 gap-1 pr-[10px] pl-[9px]">
        <input aria-label="Search properties" placeholder="Search ... (use Esc to clear text)" className="min-w-0 flex-1 rounded-[2px] border border-[#dfe3ec] border-t-[#ababb3] bg-white px-[2px] text-[11px] outline-none placeholder:text-[#7a7a7a]" />
        <button type="button" aria-label="Advanced" className="flex w-[21px] items-center justify-center rounded-[2px] border border-[#2c628b] bg-linear-to-b from-[#b9dcf0] to-[#6cb2da]"><GearIcon /></button>
      </div>
      <div className="mt-[7px] mb-[11px] flex min-h-0 flex-1 pl-[9px]">
        <div className="w-[279px] overflow-hidden">
          <Fold>Properties (Oedometer_MPScalar_0*)</Fold>
          <div className="mt-3"><Fold>Display (UnstructuredGridRepresentation)</Fold></div>
          <div className="mt-[6px]"><Row label="Representation" className="h-7"><Select label="Representation" value="Surface" className="flex-1" /></Row></div>
          <Heading>Coloring</Heading>
          <div className="mt-[7px] flex gap-1">
            <Select label="Color array" value="pressure_liquid" icon className="w-[206px]" /><Select label="Array component" className="w-[69px]" />
          </div>
          <div className="mt-[5px] flex h-[22px] gap-[6px] px-px">
            <button type="button" className={btn + "flex-1 gap-[6px] rounded-[3px] border border-[#2c628b] bg-linear-to-b from-[#d9f0fc] via-[#a6d8f2] to-[#6cb2da]"}><BarIcon s={16} />Show</button>
            <button type="button" className={btn + "flex-1 " + FACE}><EditMapIcon s={16} />Edit</button>
            <button type="button" className={btn + "flex-1 " + FACE}><RangeIcon s={16} dim />Rescale</button>
          </div>
          <Heading className="mt-[9px]">Scalar Coloring</Heading>
          <div className="mt-2 flex h-[35px] flex-col justify-between"><Check label="Map Scalars" on /><Check label="Interpolate Scalars Before Mapping" on /></div>
          <Heading className="mt-[9px]">Styling</Heading>
          <div className="mt-[6px]">
            <Row label="Opacity"><Slider label="Opacity" value={100} /><Field label="Opacity value" value="1" className="ml-[7px] flex-1" /></Row>
            <Row label="Point Size"><Field label="Point Size" value="5" className="flex-1" /></Row>
            <Row label="Line Width" className="h-7"><Field label="Line Width" value="1" className="flex-1" /></Row>
          </div>
          <Heading>Lighting</Heading>
          <div className="mt-[6px]">
            <Row label="Interpolation"><Select label="Interpolation" value="Gouraud" className="flex-1" /></Row>
            <Row label="Specular"><Slider label="Specular" value={13} /><Field label="Specular value" value="0.13" className="ml-[7px] flex-1" /></Row>
            <Row label="Specular Color" className="h-[26px]"><ColorButton label="Specular Color" color="#ffffff" /></Row>
            <Row label="Specular Power" className="h-7"><Slider label="Specular Power" value={100} /><Field label="Specular Power value" value="100" className="ml-[7px] flex-1" /></Row>
          </div>
          <Heading>Edge Styling</Heading>
          <div className="mt-[7px]"><Row label="Edge Color" className="h-[29px]"><ColorButton label="Edge Color" color="#000080" /></Row></div>
          <Heading>Backface Styling</Heading>
          <div className="mt-2"><Row label="Backface"><Select label="Backface" value="Follow Frontface" className="flex-1" /></Row></div>
        </div>
        <ScrollBar thumb="h-[286px]" className="ml-px" />
      </div>
    </aside>
  );
}

/* ---------- render view ---------- */
const TOP_CELLS: number[][][] = [
  [[13, 5], [20, 4], [7, 12], [13, 9], [20, 10], [6, 17], [13, 16], [42, 4], [35, 9], [42, 9]],
  [[7, 13], [13, 15], [7, 19], [35, 7], [41, 7], [28, 13], [35, 16], [28, 19], [41, 10]],
  [[13, 6], [20, 5], [6, 14], [20, 15], [6, 17], [13, 22], [42, 5], [35, 8], [41, 7], [41, 15]],
  [[7, 12], [6, 16], [7, 18], [13, 20], [35, 4], [42, 3], [28, 10], [41, 12], [28, 16], [35, 19]],
  [[13, 5], [20, 9], [20, 13], [7, 13], [6, 18], [13, 22], [35, 5], [41, 9], [42, 13]],
  [[7, 13], [6, 17], [13, 20], [35, 4], [41, 8], [28, 11], [42, 11], [28, 17], [35, 19]],
];
const PATTERN_A = [[13, 8], [20, 8], [6, 15], [20, 15], [7, 21], [13, 21], [35, 8], [41, 8], [42, 15]];
const PATTERN_B = [[7, 14], [6, 20], [13, 20], [35, 6], [41, 7], [28, 13], [42, 13], [28, 20], [35, 20]];

function Mesh() {
  const rows = 20, h = 23.5, top = 58;
  const red: string[] = ["M0 49 H48 M0 49 L14 58 M24 49 L38 58"];
  const sq: React.ReactNode[] = [];
  for (let i = 0; i < rows; i++) {
    const y = Math.round(top + i * h), y2 = Math.round(top + (i + 1) * h);
    red.push(`M0 ${y} H48`);
    for (const x of [0, 24]) red.push(`M${x} ${y} L${x + 24} ${y2}`);
    const k = i < 7 ? 16 + i : i > 9 ? (i - 9) * 1.6 : 0;
    if (k) {
      const ym = Math.round(y + k);
      red.push(`M0 ${ym} H48`);
      for (const x of [0, 24]) red.push(i < 7 ? `M${x} ${Math.round(Math.max(ym - h, 49))} L${x + 24} ${ym}` : `M${x} ${ym} L${x + 24} ${Math.round(ym + h)}`);
    }
    (TOP_CELLS[i] ?? (i % 2 ? PATTERN_B : PATTERN_A)).forEach(([x, dy], j) => sq.push(<rect key={`${i}-${j}`} x={x - 2} y={y + dy - 2} width="5" height="5" />));
  }
  const end = Math.round(top + rows * h);
  red.push(`M0 ${end} H48 M0 ${end + 5} H48 M0 ${end + 10} H48 M0 ${end} L24 ${end + 5} M24 ${end} L48 ${end + 5} M0 ${end + 5} L24 ${end + 10} M24 ${end + 5} L48 ${end + 10}`);
  red.push(`M0 49 V${end + 10} M24 49 V${end + 10} M48 49 V${end + 10}`);
  return (
    <svg width="50" height="541" viewBox="-1 -1 50 541" fill="none" strokeWidth="1" shapeRendering="crispEdges" className="absolute top-[63px] left-[590px]">
      <path d="M0 0 H48 V48 H0 Z M24 0 V48 M0 5 H48 M0 10 H48 M0 24 H48 M0 33 H48 M3 0 L22 4 M27 0 L46 4 M3 5 L22 9 M27 5 L46 9 M24 0 L14 10 L0 24 M48 0 L38 10 L24 24 M24 10 L0 33 M48 10 L24 33 M24 24 L0 48 M48 24 L24 48 M24 33 L0 57 M48 33 L24 57" stroke="#3b4cc0" />
      <path d={red.join(" ")} stroke="#b40426" />
      <g fill="#b40426">{sq}</g>
    </svg>
  );
}

const COOLWARM = ["#3b4cc0", "#6282ea", "#8db0fe", "#b8d0f9", "#dddddd", "#f5c4ad", "#f49a7b", "#de604d", "#b40426"];

function Legend() {
  const lato = "absolute font-['Lato',sans-serif] leading-none whitespace-nowrap text-black ";
  return (
    <div className="absolute top-[136px] left-[846px] h-[370px] w-[310px]">
      <svg width="110" height="310" viewBox="0 0 110 310" className="absolute top-[52px] left-[54px]">
        <defs><linearGradient id="legend-map" x1="0" y1="1" x2="0" y2="0">{COOLWARM.map((c, i) => <stop key={c} offset={i / 8} stopColor={c} />)}</linearGradient></defs>
        <rect x="10" y="6" width="18" height="300" fill="url(#legend-map)" />
        <path d="M0 5.500 H8" stroke="#b40426" /><path d="M0 305.500 H8" stroke="#3b4cc0" />
        {Array.from({ length: 41 }, (_, i) => <path key={i} d={`M${i && i < 40 && i % 10 === 0 ? 20 : 26} ${Math.round(5 + i * 7.5) + 0.5} H36`} stroke="#222" />)}
      </svg>
      <span className={lato + "top-px left-[65px] text-[36px]"}>pressure_liquid</span>
      <span className={lato + "top-[39px] right-[257px] text-[36px]"}>0</span>
      <span className={lato + "top-[118px] left-[91px] text-[28px]"}>-2.5</span>
      <span className={lato + "top-[189px] left-[91px] text-[36px]"}>-5</span>
      <span className={lato + "top-[268px] left-[91px] text-[28px]"}>-7.5</span>
      <span className={lato + "top-[339px] right-[257px] text-[36px]"}>-10</span>
    </div>
  );
}

function Axes() {
  return (
    <svg width="60" height="60" viewBox="0 0 60 60" fill="none" className="absolute bottom-[75px] left-[76px]">
      <path d="M8 50 V12" stroke="#f5f0a0" /><path d="M5 14 L8 7 L11 14 Z" fill="#e8d21c" stroke="#7d7416" strokeWidth=".6" />
      <path d="M8 50 H46" stroke="#f04a3c" /><path d="M44 47 L52 50 L44 53 Z" fill="#d8140c" stroke="#7a0c06" strokeWidth=".6" />
      <circle cx="8" cy="50" r="4" fill="#0e5a1c" />
      <g fill="#000" fontFamily="Lato" fontSize="13"><text x="9" y="14">Y</text><text x="46" y="50">X</text><text x="10" y="49">Z</text></g>
    </svg>
  );
}

const VIEW_TOOLS: [string, React.ReactNode][] = [
  ["Camera undo", <><path d="M2 12 H13 V21 H2 Z" fill="#9a9484" stroke="#5d584b" /><path d="M8 9 L12 3 L14 6 Q20 5 21 11 L20 17 Q17 9 14 11 L15 13 Z" fill="#e8512f" /></>],
  ["Camera redo", <><path d="M11 12 H22 V21 H11 Z" fill="#c9c9c9" stroke="#9d9d9d" /><path d="M16 9 L12 3 L10 6 Q4 5 3 11 L4 17 Q7 9 10 11 L9 13 Z" fill="#c4c4c4" stroke="#aaa" /></>],
  ["3D", null],
  ["Screenshot", <><rect x="2" y="4" width="20" height="17" fill="#a09c88" stroke="#4b493d" /><circle cx="14" cy="14" r="5" fill="#b5dca4" stroke="#3e5a36" strokeWidth="2" /></>],
  ["Select surface cells", <><rect x="3" y="3" width="18" height="18" stroke="#6c8a5c" strokeWidth="2" strokeDasharray="3 2" /><path d="M12 6 L18 18 H6 Z" fill="#8ccf69" stroke="#4c7a35" /></>],
  ["Select surface points", <><rect x="3" y="3" width="18" height="18" stroke="#8a8a8a" strokeWidth="2" strokeDasharray="3 3" /><path d="M7 15 h3 v3 h-3 z M14 13 h3 v3 h-3 z M10 7 h3 v3 h-3 z" fill="#ee5b3b" /></>],
  ["Select frustum cells", <><path d="M3 6 L15 2 L21 9 V18 L9 20 L3 14 Z" fill="#7fc95b" stroke="#4c7a35" strokeDasharray="3 1" /><path d="M13 12 L21 20" stroke="#6a4a20" strokeWidth="2.500" /></>],
  ["Select frustum points", <><path d="M3 3 L12 6 V20 L3 16 Z M15 4 L21 6 M20 12 V18" stroke="#ee5b3b" strokeWidth="2.500" strokeDasharray="3 2" /><path d="M11 11 L19 20" stroke="#555" strokeWidth="2" /></>],
  ["Select polygon cells", <><path d="M3 4 L12 8 L20 3 L17 12 L21 20 H9 L4 14 Z" stroke="#4c6a3f" strokeWidth="2.500" strokeDasharray="3 2" /><path d="M6 10 L15 15 L9 18 Z" fill="#6cab4b" /></>],
  ["Select polygon points", <><path d="M3 4 L12 8 L20 3 L17 12 L21 20 H9 L4 14 Z" stroke="#5a6a4f" strokeWidth="2.500" strokeDasharray="3 2" /><path d="M6 7 h4 v4 h-4 z M12 11 h4 v4 h-4 z M7 14 h4 v4 h-4 z" fill="#ee5b3b" /></>],
  ["Select block", <><rect x="3" y="3" width="16" height="16" stroke="#8a8a8a" strokeWidth="2" strokeDasharray="2 3" /><circle cx="12" cy="11" r="4" fill="#a9cf97" stroke="#7a9a6a" /><path d="M14 14 L20 20" stroke="#6a7a5a" strokeWidth="3" /></>],
  ["Show spreadsheet", <><rect x="2" y="3" width="20" height="18" fill="#dceac9" stroke="#7d93a5" /><rect x="2" y="3" width="20" height="5" fill="#5f9fd0" /><path d="M5 12 H8 M10 12 H20 M5 16 H8 M10 16 H20" stroke="#7fae5f" strokeWidth="2" /></>],
];

const SPLITS = ["M2 2 H11 V10 H2 Z M6.500 2 V10", "M2 2 H11 V10 H2 Z M2 6 H11", "M2 2 H11 V10 H2 Z M2 3 H11", "M3 3 L10 10 M10 3 L3 10"];

function ViewArea() {
  return (
    <section className="flex min-h-0 flex-1 flex-col">
      <div role="tablist" className="flex h-[21px] shrink-0 items-end border-b border-[#8b8e96]">
        <button type="button" role="tab" aria-selected className="-mb-px flex h-5 w-[90px] items-center gap-1 border border-b-0 border-[#8b8e96] bg-white pl-[10px]">Layout #1 <CrossIcon /></button>
        <button type="button" role="tab" aria-selected={false} aria-label="New layout" className="h-[18px] w-7 border border-b-0 border-l-0 border-[#8b8e96] bg-linear-to-b from-[#f4f4f4] to-[#cfcfcf] text-[13px] leading-none">+</button>
      </div>
      <div className="flex min-h-0 flex-1 flex-col border border-t-0 border-[#8b8e96] bg-white p-px">
        <div className="flex h-5 shrink-0 items-center justify-between">
          <div className="flex h-full items-center border-r border-b border-[#bdbdbd] pl-[2px]">
            {VIEW_TOOLS.map(([n, g]) => (
              <button key={n} type="button" aria-label={n} className="flex h-5 w-[23px] items-center justify-center">{g ? <Ic s={14}>{g}</Ic> : <span className="text-[11px]">3D</span>}</button>
            ))}
          </div>
          <div className="flex gap-[5px] pr-[5px]">
            {SPLITS.map((d, i) => (
              <button key={d} type="button" aria-label={["Split horizontally", "Split vertically", "Maximize", "Close view"][i]} className="flex h-[15px] w-[18px] items-center justify-center rounded-[3px] border border-[#666] bg-[#f0f0f0]">
                <svg width="13" height="12" viewBox="0 0 13 12" fill="none"><path d={d} stroke="#000" strokeWidth="1.200" /></svg>
              </button>
            ))}
          </div>
        </div>
        <div className="relative min-h-0 flex-1 overflow-hidden border-2 border-[#0000ff] bg-white">
          <Mesh />
          <Legend />
          <Axes />
        </div>
      </div>
    </section>
  );
}

/* ---------- animation ---------- */
function Animation() {
  const majors = ["0.000e+00", "8.000e+00", "1.600e+01", "2.400e+01", "3.200e+01", "4.000e+01"];
  const cell = "border-r border-b border-[#dadada] bg-linear-to-b from-white to-[#f1f3f5] ";
  return (
    <section className="mt-[7px] mb-[3px] flex shrink-0 flex-col">
      <DockTitle title="Animation View" />
      <div className="mt-1 flex h-[21px] items-center pl-[2px] *:shrink-0">
        <span className="w-8">Mode:</span><Select label="Mode" value="Snap To TimeSteps" className="w-[116px]" />
        <span className="w-[26px] pl-px">Time</span><Field label="Time" value="40" disabled className="w-[167px]" />
        <span className="w-[57px] pl-[2px] whitespace-nowrap">Start Time:</span><Field label="Start Time" value="0" disabled className="w-[169px]" />
        <button type="button" aria-label="Lock start time" className={"ml-[3px] flex h-[21px] w-[21px] items-center justify-center " + FACE}><LockIcon /></button>
        <span className="w-[52px] pl-[2px] whitespace-nowrap">End Time:</span><Field label="End Time" value="40" disabled className="w-[168px]" />
        <button type="button" aria-label="Lock end time" className={"ml-[3px] flex h-[21px] w-[21px] items-center justify-center " + FACE}><LockIcon /></button>
        <span className="w-16 pl-[2px] whitespace-nowrap text-[#7a7a7a]">No. Frames:</span><Field label="No. Frames" value="10" disabled className="w-[169px]" />
      </div>
      <div className="mt-[3px] ml-[2px] flex flex-col border border-[#8b8e96] pb-[5px]">
        <div className="flex h-[60px]">
          <div className="grid w-[161px] shrink-0 grid-cols-[24px_21px_116px] grid-rows-2 font-['Open_Sans',sans-serif] text-[12px]">
            <span className={cell} /><span className={cell} /><span className={cell + "flex items-center pl-[4px]"}>Time</span>
            <span className={cell} />
            <span className={cell + "flex items-center pl-1"}><Check label="" on /></span>
            <span className={cell + "flex items-center pl-[4px]"}>TimeKeeper - Time</span>
          </div>
          <div className="flex min-w-0 flex-1 flex-col border border-r-2 border-black">
            <div className="relative flex h-[30px] shrink-0 flex-col justify-end overflow-hidden border-b border-black bg-white">
              {majors.map((m, i) => (
                <span key={m} className={"absolute top-[6px] " + (i === 0 ? "left-0 -ml-px" : i === 5 ? "right-0" : "-translate-x-1/2")} style={i > 0 && i < 5 ? { left: `${i * 20}%` } : undefined}>{m}</span>
              ))}
              <div className="flex h-[3px]">{Array.from({ length: 40 }, (_, i) => <span key={i} className="flex-1 border-r border-black" />)}</div>
              <span className="absolute right-0 bottom-0 h-[6px] w-1 rounded-tl-sm bg-black" />
            </div>
          </div>
        </div>
        <div className="flex h-[30px] items-center">
          <button type="button" aria-label="Add track" className={cell + "flex h-[30px] w-6 items-center justify-center"}>
            <svg width="13" height="13" viewBox="0 0 13 13"><path d="M4.500 .5 H8.500 V4.500 H12.500 V8.500 H8.500 V12.500 H4.500 V8.500 H.5 V4.500 H4.500 Z" fill="#7f9be0" stroke="#14266b" strokeWidth="1.200" /></svg>
          </button>
          <Select label="Track source" value="Oedometer_MPScalar_0*" className="ml-[6px] w-[152px]" />
          <Select label="Track property" value="Visibility" className="ml-[6px] w-[69px]" />
        </div>
      </div>
    </section>
  );
}

/* ---------- color map editor ---------- */
function TransferTable({ head, rows, cols, className }: { head: string[]; rows: string[][]; cols: string; className: string }) {
  return (
    <div className={"flex shrink-0 border border-[#828790] bg-[linear-gradient(to_right,#f0f0f0_15px,#fff_15px)] " + className}>
      <table className="w-full table-fixed self-start border-collapse bg-white font-['Open_Sans',sans-serif] text-[12px]">
        <thead>
          <tr className="h-[22px] bg-linear-to-b from-white to-[#f0f2f4]">
            <th className="w-[15px] border-r border-b border-[#dcdcdc]" />
            {head.map((h) => <th key={h} className={"border-r border-b border-[#dcdcdc] p-0 text-center font-normal " + cols}>{h}</th>)}
          </tr>
        </thead>
        <tbody>
          {rows.map((r, i) => (
            <tr key={i} className={"h-[30px] " + (i % 2 ? "bg-[#f5f5f5]" : "bg-white")}>
              <th className="border-r border-b border-[#dcdcdc] bg-linear-to-b from-white to-[#f0f2f4] p-0 text-center font-normal">{i + 1}</th>
              {r.map((c, j) => <td key={j} className="border-r border-b border-[#d4d4d4] p-0 pl-[3px]">{c}</td>)}
            </tr>
          ))}
        </tbody>
      </table>
    </div>
  );
}

function Knob({ x, y, c, split }: { x: number; y: number; c: string; split?: "l" | "r" }) {
  return (
    <g>
      <circle cx={x} cy={y} r="6.500" fill="#77776a" /><circle cx={x} cy={y} r="5.500" fill="#e9e9df" /><circle cx={x} cy={y} r="4" fill={c} stroke="#8b8b80" strokeWidth=".8" />
      {split === "l" && <path d={`M${x} ${y - 3.5} A3.5 3.5 0 0 1 ${x} ${y + 3.5} Z`} fill="#3b4cc0" />}
      {split === "r" && <path d={`M${x} ${y - 3.5} A3.5 3.5 0 0 0 ${x} ${y + 3.5} Z`} fill="#b40426" />}
    </g>
  );
}

function MapChart() {
  return (
    <svg viewBox="0 0 295 161" className="h-[161px] min-w-0 flex-1 bg-white" fill="none">
      <defs>
        <linearGradient id="bar-map">{COOLWARM.map((c, i) => <stop key={c} offset={i / 8} stopColor={c} />)}</linearGradient>
        <linearGradient id="fade-map">{COOLWARM.map((c, i) => <stop key={c} offset={i / 8} stopColor={c} stopOpacity={i / 8} />)}</linearGradient>
      </defs>
      <path d="M8 113 L287 8 V113 Z" fill="url(#fade-map)" />
      <path d="M7 113 L287 8" stroke="#404048" strokeWidth="1.500" />
      <rect x="8" y="129" width="279" height="24" fill="url(#bar-map)" />
      <Knob x={7} y={113} c="#8f9be0" /><Knob x={287} y={8} c="#d9657a" />
      <Knob x={7} y={141} c="#9aa6e6" split="l" /><Knob x={147} y={141} c="#d8d8d6" /><Knob x={287} y={141} c="#e07a8c" split="r" />
    </svg>
  );
}

function RightDock() {
  const mini = "flex h-5 w-[21px] items-center justify-center ";
  const blue = "rounded-[3px] border border-[#2c628b] bg-linear-to-b from-[#b9dcf0] to-[#6cb2da]";
  return (
    <aside className="relative flex w-[349px] shrink-0 flex-col pt-px">
      <div className="-mr-1"><DockTitle title="Color Map Editor" /></div>
      <div className="mt-3 flex h-5 shrink-0 gap-1 pr-[6px] pl-[9px]">
        <input aria-label="Search color map" placeholder="Search..." className="min-w-0 flex-1 rounded-[2px] border border-[#dfe3ec] border-t-[#ababb3] bg-white px-[2px] text-[11px] outline-none placeholder:text-[#7a7a7a]" />
        <button type="button" aria-label="Advanced" className={mini + FACE}><GearIcon /></button>
        <button type="button" aria-label="Show legend" className={mini + blue}><BarIcon s={16} /></button>
        <button type="button" aria-label="Edit legend" className={mini + FACE}><PresetMapIcon /></button>
      </div>
      <div className="mt-[7px] mb-[11px] flex min-h-0 flex-1 pr-[6px] pl-[9px]">
        <div className="flex min-w-0 flex-1 flex-col overflow-hidden pt-[2px]">
          <div className="h-[15px] shrink-0"><Check label="Interpret Values As Categories" /></div>
          <Heading className="mt-2 shrink-0">Mapping Data</Heading>
          <div className="mt-[6px] flex shrink-0 gap-px">
            <MapChart />
            <div className="flex flex-col gap-[3px] py-px">
              <button type="button" aria-label="Rescale to data" className={mini + FACE}><RangeIcon s={17} dim /></button>
              <button type="button" aria-label="Rescale to custom range" className={mini + FACE}><RangeIcon s={17} dim letter="c" /></button>
              <button type="button" aria-label="Rescale over time" className={mini + FACE}><RangeIcon s={17} dim letter="t" /></button>
              <button type="button" aria-label="Invert" className={mini + FACE}><InvertIcon /></button>
              <button type="button" aria-label="Choose preset" className={mini + FACE}><FavIcon /></button>
              <button type="button" aria-label="Save preset" className={mini + FACE}><SaveIcon s={17} /></button>
              <button type="button" aria-label="Advanced map" className={mini + blue}><GearIcon /></button>
            </div>
          </div>
          <div className="mt-[6px] flex h-5 shrink-0 items-center"><span className="w-[33px]">Data:</span><Field label="Data" disabled className="flex-1" /></div>
          <div className="mt-[7px] flex h-[61px] shrink-0 flex-col justify-between">
            <Check label="Use log scale when mapping data to colors" /><Check label="Enable opacity mapping for surfaces" /><Check label="Automatically rescale transfer functions to fit data" />
          </div>
          <span className="mt-[6px] mb-1 leading-4">Color transfer function values</span>
          <TransferTable className="h-[192px]" cols="w-1/4" head={["Value", "R", "G", "B"]} rows={[["-10", "0.23", "0.299", "0.754"], ["-5", "0.865", "0.865", "0.865"], ["0", "0.706", "0.016", "0.15"]]} />
          <span className="mt-[5px] mb-1 leading-4">Opacity transfer function values</span>
          <TransferTable className="h-[192px]" cols="w-1/2" head={["Value", "Opacity"]} rows={[["-10", "0"], ["0", "1"]]} />
          <Heading className="mt-[8px] shrink-0">Color Mapping Parameters</Heading>
          <div className="mt-[7px] shrink-0"><Check label="Lock Scalar Range" on /></div>
          <div className="mt-px flex shrink-0 items-start"><span className="w-[61px] leading-[17px] whitespace-nowrap">Color Space</span><Select label="Color Space" value="Diverging" className="mt-[3px] flex-1" /></div>
        </div>
        <ScrollBar thumb="h-[706px]" className="ml-px" />
      </div>
      <div className="absolute right-0 bottom-[33px]">
        <svg width="25" height="54" viewBox="0 0 25 54"><path d="M25 .5 H3 L.5 3 V38 L25 52 Z" fill="#fff" stroke="#b5b5b5" /><path d="M5 5 L22 6 V26 L6 23 Z" fill="#1586ec" /><circle cx="14" cy="15" r="7" fill="#fff" /><path d="M8 15 L12 11.500 V14 H16 V11.500 L20 15 L16 18.500 V16 H12 V18.500 Z" fill="#1586ec" /></svg>
      </div>
    </aside>
  );
}

export default function App() {
  return (
    <div className="flex h-screen min-h-[600px] overflow-hidden border-l-2 border-[#15181d] bg-[#b9d1ea] font-['DejaVu_Sans_Condensed','Open_Sans',sans-serif] text-[11px] leading-[15px] text-black">
      <div className="flex min-w-0 flex-1 flex-col">
        <TitleBar />
        <div className="ml-[6px] flex min-h-0 flex-1 flex-col bg-[#f0f0f0]">
          <nav className="flex h-[21px] shrink-0 items-center gap-[14px] bg-linear-to-b from-[#fbfcfe] via-[#dfe4f4] to-[#e3e6f5] pb-px pl-2 font-['Open_Sans',sans-serif] text-[12px]">
            {["File", "Edit", "View", "Sources", "Filters", "Tools", "Macros", "Help"].map((m) => <button key={m} type="button">{m}</button>)}
          </nav>
          <Toolbars />
          <main className="flex min-h-0 flex-1">
            <LeftDock />
            <div className="mr-[6px] ml-1 flex min-w-0 flex-1 flex-col"><ViewArea /><Animation /></div>
            <RightDock />
          </main>
          <footer className="flex h-[18px] shrink-0 items-end pr-[15px] pl-[950px]">
            <button type="button" aria-label="Abort" className="flex h-[15px] w-[17px] items-center justify-center rounded-t-[3px] border border-b-0 border-[#b0b0b0]"><svg width="9" height="9" viewBox="0 0 9 9"><path d="M1 1 L8 8 M8 1 L1 8" stroke="#a8a8a8" strokeWidth="3" /></svg></button>
            <span className="ml-px flex h-[18px] flex-1 rounded-t-[3px] border border-b-0 border-[#a8a8a8] bg-linear-to-b from-[#f4f4f4] to-[#c8c8c8] to-40%" />
            <span className="ml-[5px] h-[18px] w-px bg-[#c4c4c4]" />
          </footer>
        </div>
        <div className="h-[2px] shrink-0 border-t border-[#2a2f38] bg-[#b9d1ea]" />
      </div>
    </div>
  );
}
